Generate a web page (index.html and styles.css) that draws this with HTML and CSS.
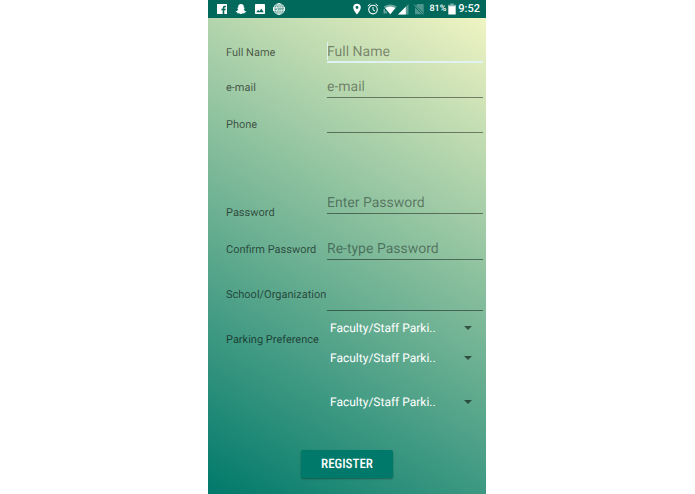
FILE: index.html
```html
<!DOCTYPE html>
<html lang="en">
<head>
  <meta charset="UTF-8" />
  <meta name="viewport" content="width=device-width, initial-scale=1.0"/>
  <title>Register</title>
  <link rel="stylesheet" href="styles.css">
</head>
<body>

<div class="phone">
  <header class="status-bar">
    <div class="notifications">
      <svg viewBox="0 0 12 12"><path fill="#fff" fill-rule="evenodd" d="M1.500 1h9a.5.5 0 0 1 .5.5v9a.5.5 0 0 1-.5.5H8.300V7.300h1.300l.2-1.500H8.300v-.9q0-.7.700-.7h.9V2.700H8.600q-1.900 0-1.900 2v1.100H5.400v1.500h1.300V11H1.500a.5.5 0 0 1-.5-.5v-9a.5.5 0 0 1 .5-.5z"/></svg>
      <svg viewBox="0 0 12 12"><path fill="#fff" d="M6 1C4.300 1 3.200 2.200 3.200 3.600v1.200l-1-.1.100.7.900.6C2.800 7.300 2 8.200.6 8.600c.1.700 1.100.8 1.700 1l.3.8 1.500-.1c.7.400 1.200.8 1.900.8s1.200-.4 1.900-.8l1.500.1.300-.8c.6-.2 1.600-.3 1.700-1C10 8.200 9.200 7.300 8.800 6l.9-.6.1-.7-1 .1V3.600C8.800 2.200 7.700 1 6 1z"/></svg>
      <svg viewBox="0 0 12 12"><path fill="#fff" fill-rule="evenodd" d="M1.700 1h8.600q.7 0 .7.700v8.600q0 .7-.7.700H1.700q-.7 0-.7-.7V1.700Q1 1 1.700 1zM2.200 9.200h7.600L7.300 5.800 5.400 8.200 4.200 6.700z"/></svg>
      <svg viewBox="0 0 12 12"><g fill="none" stroke="#fff" stroke-width=".8"><circle cx="6" cy="6" r="5.400"/><ellipse cx="6" cy="6" rx="2.500" ry="5.400"/><path d="M6 .6v10.800M1.500 3h9M1.500 9h9"/></g><path fill="#fff" d="M0 4.300h12v3.400H0z"/><path fill="none" stroke="#00695c" stroke-width=".5" d="M1.500 5l.7 2 .7-1.500.7 1.500.7-2M5.300 5.200h1.200v1.600H5.300zM7.600 7V5.200h1v1h-1M9.600 7V5.200h1v1h-1"/></svg>
    </div>
    <div class="indicators">
      <svg viewBox="0 0 12 12"><path fill="#fff" fill-rule="evenodd" d="M6 .7a3.800 3.800 0 0 0-3.800 3.800C2.200 7.300 6 11.500 6 11.500s3.800-4.200 3.800-7A3.800 3.800 0 0 0 6 .7zm0 2.400a1.400 1.400 0 1 1 0 2.800 1.400 1.400 0 0 1 0-2.800z"/></svg>
      <svg viewBox="0 0 12 12"><g fill="none" stroke="#fff"><circle cx="6" cy="6.600" r="4.300" stroke-width="1.100"/><path d="M6 4v2.800l2 1.200M.8 3.100L3.400.9M11.200 3.100L8.600.9"/></g></svg>
      <div class="network">
        <svg class="wifi" viewBox="0 0 14 12"><path fill="#fff" opacity=".4" d="M.8 3.500Q7.300-.5 13.800 3.500L7.300 11.200z"/><path fill="#fff" d="M2.200 5Q7.300 1.800 12.400 5L7.300 11.200z"/><path stroke="#fff" stroke-width=".9" opacity=".7" d="M1.200 6v4.500M3 8v2.500"/></svg>
        <svg viewBox="0 0 12 12"><path fill="#fff" opacity=".35" d="M11.500 1v10.500H1z"/><path fill="#fff" d="M8.800 3.700v7.800H1z"/></svg>
      </div>
      <svg viewBox="0 0 12 12"><path fill="#fff" opacity=".3" d="M4.500 1H10q.7 0 .7.700v9.600H2V3.500z"/><path stroke="#00695c" stroke-width="1.800" d="M1 2l10 10"/><path stroke="#fff" opacity=".4" d="M1 1.500l9.500 10"/></svg>
      <div class="power">
        <span class="percent">81%</span>
        <svg class="battery" viewBox="0 0 8 12"><path fill="#fff" opacity=".5" d="M2.500.5h3v1.200H8v2H0v-2h2.500z"/><path fill="#fff" d="M.3 3.200h7.400v8.300H.3z"/></svg>
        <span class="clock">9:52</span>
      </div>
    </div>
  </header>

  <form class="register-form">
    <div class="row">
      <label for="fullName">Full Name</label>
      <input class="active" type="text" id="fullName" placeholder="Full Name" />
    </div>
    <div class="row">
      <label for="email">e-mail</label>
      <input type="email" id="email" placeholder="e-mail" />
    </div>
    <div class="row phone-row">
      <label for="phone">Phone</label>
      <input type="tel" id="phone" />
    </div>
    <div class="row password-row">
      <label for="password">Password</label>
      <input type="password" id="password" placeholder="Enter Password" />
    </div>
    <div class="row confirm-row">
      <label for="confirm">Confirm Password</label>
      <input type="password" id="confirm" placeholder="Re-type Password" />
    </div>
    <div class="row school-row">
      <label for="school">School/Organization</label>
      <input type="text" id="school" />
    </div>

    <div class="parking">
      <label for="parking1">Parking Preference</label>
      <div class="choices">
        <div class="spinner">
          <select id="parking1"><option>Faculty/Staff Parki..</option></select>
        </div>
        <div class="spinner">
          <select aria-label="Second parking preference"><option>Faculty/Staff Parki..</option></select>
        </div>
        <div class="spinner last">
          <select aria-label="Third parking preference"><option>Faculty/Staff Parki..</option></select>
        </div>
      </div>
    </div>

    <button class="register" type="button">REGISTER</button>
  </form>
</div>

</body>
</html>
```
FILE: styles.css
```css
* {
  box-sizing: border-box;
}
body {
  margin: 0;
  padding: 0 209px 0 208px;
  background: #fff;
  font-family: Roboto, sans-serif;
}
body, input, select, button {
  text-rendering: geometricPrecision;
}
.phone {
  display: flex;
  flex-direction: column;
  min-height: 100vh;
}

/* Status bar */
.status-bar {
  display: flex;
  justify-content: space-between;
  align-items: center;
  height: 18px;
  padding: 0 6px 0 8px;
  background: #00695c;
  color: #fff;
}
.status-bar svg {
  display: block;
  width: 12px;
  height: 12px;
}
.notifications, .indicators, .network, .power {
  display: flex;
  align-items: center;
}
.notifications {
  gap: 7px;
}
.indicators {
  gap: 4px;
}
.power {
  gap: 2px;
  line-height: 14px;
}
.status-bar .wifi {
  width: 14px;
}
.status-bar .battery {
  width: 8px;
}
.percent {
  font-size: 9px;
  font-weight: 500;
}
.clock {
  font-size: 11px;
  font-weight: 500;
}

/* Form */
.register-form {
  flex: 1;
  padding: 10px 3px 16px 18px;
  background: linear-gradient(30deg, #00796b, #f0f4c3);
}
.row {
  display: flex;
  align-items: flex-end;
  height: 35px;
}
label {
  flex: none;
  width: 101px;
  padding-bottom: 2px;
  font-size: 11px;
  line-height: 16px;
  white-space: nowrap;
  color: rgba(0, 0, 0, 0.6);
}
input {
  flex: 1;
  min-width: 0;
  height: 22px;
  padding: 0;
  border: 0;
  border-bottom: 1px solid rgba(0, 0, 0, 0.45);
  border-radius: 0;
  outline: none;
  background: none;
  font-family: inherit;
  font-size: 14px;
  color: #222;
}
input::placeholder {
  color: rgba(0, 0, 0, 0.42);
}
/* focused field, with its cursor */
input.active {
  padding-top: 1px;
  border-bottom: 2px solid #e0f2f1;
  background: linear-gradient(#e0f2f1, #e0f2f1) 0 1px / 1px 18px no-repeat;
}
.phone-row label {
  padding-bottom: 0;
}
.password-row {
  height: 88px;
}
.password-row label {
  padding-bottom: 0;
}
.password-row input {
  margin-bottom: 7px;
}
.confirm-row {
  height: 39px;
}
.school-row {
  height: 51px;
}
.school-row label {
  padding-bottom: 8px;
}

/* Parking */
.parking {
  display: flex;
  padding-top: 2px;
}
.parking label {
  padding-top: 19px;
}
.choices {
  flex: 1;
}
.spinner {
  position: relative;
}
.spinner.last {
  margin-top: 14px;
}
.spinner::after {
  content: "";
  position: absolute;
  top: 13px;
  right: 11px;
  border: 4px solid transparent;
  border-top-color: rgba(0, 0, 0, 0.55);
  border-bottom: 0;
  pointer-events: none;
}
select {
  display: block;
  width: 100%;
  height: 30px;
  padding: 0 24px 0 3px;
  border: 0;
  appearance: none;
  background: none;
  font-family: inherit;
  font-size: 12px;
  color: #fff;
}
.register {
  display: block;
  width: 92px;
  height: 28px;
  margin: 33px auto 0 75px;
  padding: 0;
  border: 0;
  border-radius: 2px;
  background: #00796b;
  box-shadow: 0 1px 2px rgba(0, 0, 0, 0.35);
  font-family: "Roboto Condensed", Roboto, sans-serif;
  font-size: 13px;
  font-weight: 500;
  color: #fff;
}
```
